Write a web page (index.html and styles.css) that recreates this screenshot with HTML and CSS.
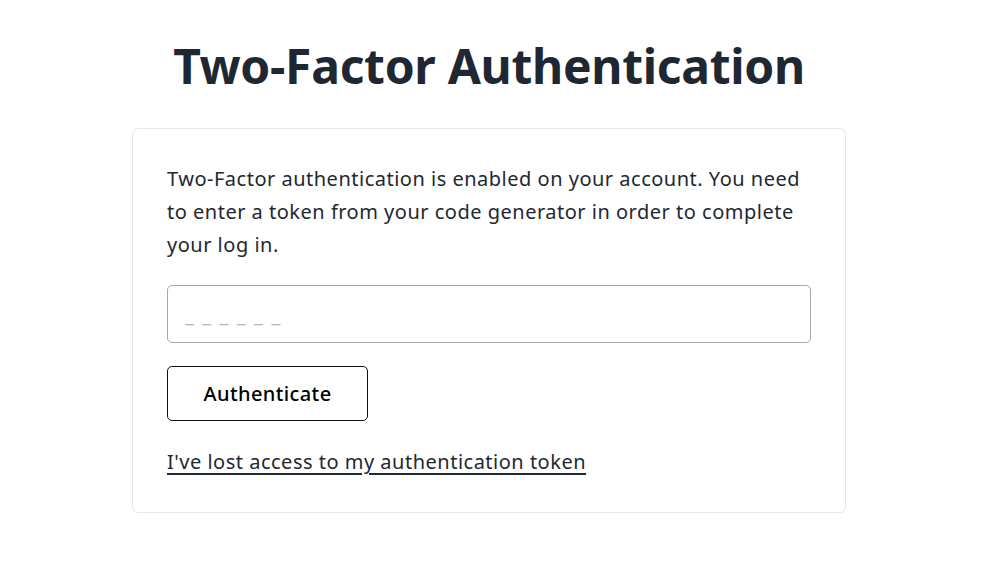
FILE: index.html
```html
<!DOCTYPE html>
<html>
<head>
<meta charset="utf-8">
<link rel="stylesheet" href="styles.css">
</head>
<body>
<main class="page">
  <h1 class="title">Two-Factor Authentication</h1>
  <section class="card">
    <p class="intro">Two-Factor authentication is enabled on your account. You need to enter a token from your code generator in order to complete your log in.</p>
    <form class="form">
      <input class="token" type="text" placeholder="_ _ _ _ _ _">
      <button class="btn" type="button">Authenticate</button>
    </form>
    <a class="lost" href="#">I've lost access to my authentication token</a>
  </section>
</main>
</body>
</html>
```
FILE: styles.css
```css
html, body {
  margin: 0;
  padding: 0;
  background: #fff;
}
body {
  font-family: "Noto Sans", "Open Sans", sans-serif;
  color: #1f2733;
}
.page {
  width: 714px;
  margin-left: 132px;
  padding-top: 30px;
}
.title {
  margin: 0 0 26px;
  text-align: center;
  font-size: 48px;
  line-height: 72px;
  font-weight: 700;
  color: #1f2733;
  letter-spacing: -0.3px;
}
.card {
  border: 1px solid #e6e6e6;
  border-radius: 6px;
  padding: 33px 34px 34px;
  box-sizing: border-box;
}
.intro {
  margin: 0 0 24px;
  font-size: 20px;
  line-height: 33px;
  letter-spacing: 0.5px;
  color: #222831;
}
.form {
  display: flex;
  flex-direction: column;
  align-items: flex-start;
  gap: 23px;
  margin: 0 0 24px;
}
.token {
  box-sizing: border-box;
  width: 100%;
  height: 58px;
  border: 1px solid #a8a8a8;
  border-radius: 5px;
  padding: 0 17px;
  font-family: inherit;
  font-size: 20px;
  color: #222;
}
.token::placeholder {
  color: #b5b5b5;
  letter-spacing: 1.6px;
}
.btn {
  box-sizing: border-box;
  width: 201px;
  height: 55px;
  border: 1px solid #111;
  border-radius: 5px;
  background: #fff;
  font-family: inherit;
  font-size: 20px;
  font-weight: 500;
  letter-spacing: 0.4px;
  color: #000;
}
.lost {
  display: inline-block;
  font-size: 20px;
  line-height: 33px;
  letter-spacing: 0.5px;
  color: #222831;
  text-decoration: underline;
  text-underline-offset: 4px;
}
```
